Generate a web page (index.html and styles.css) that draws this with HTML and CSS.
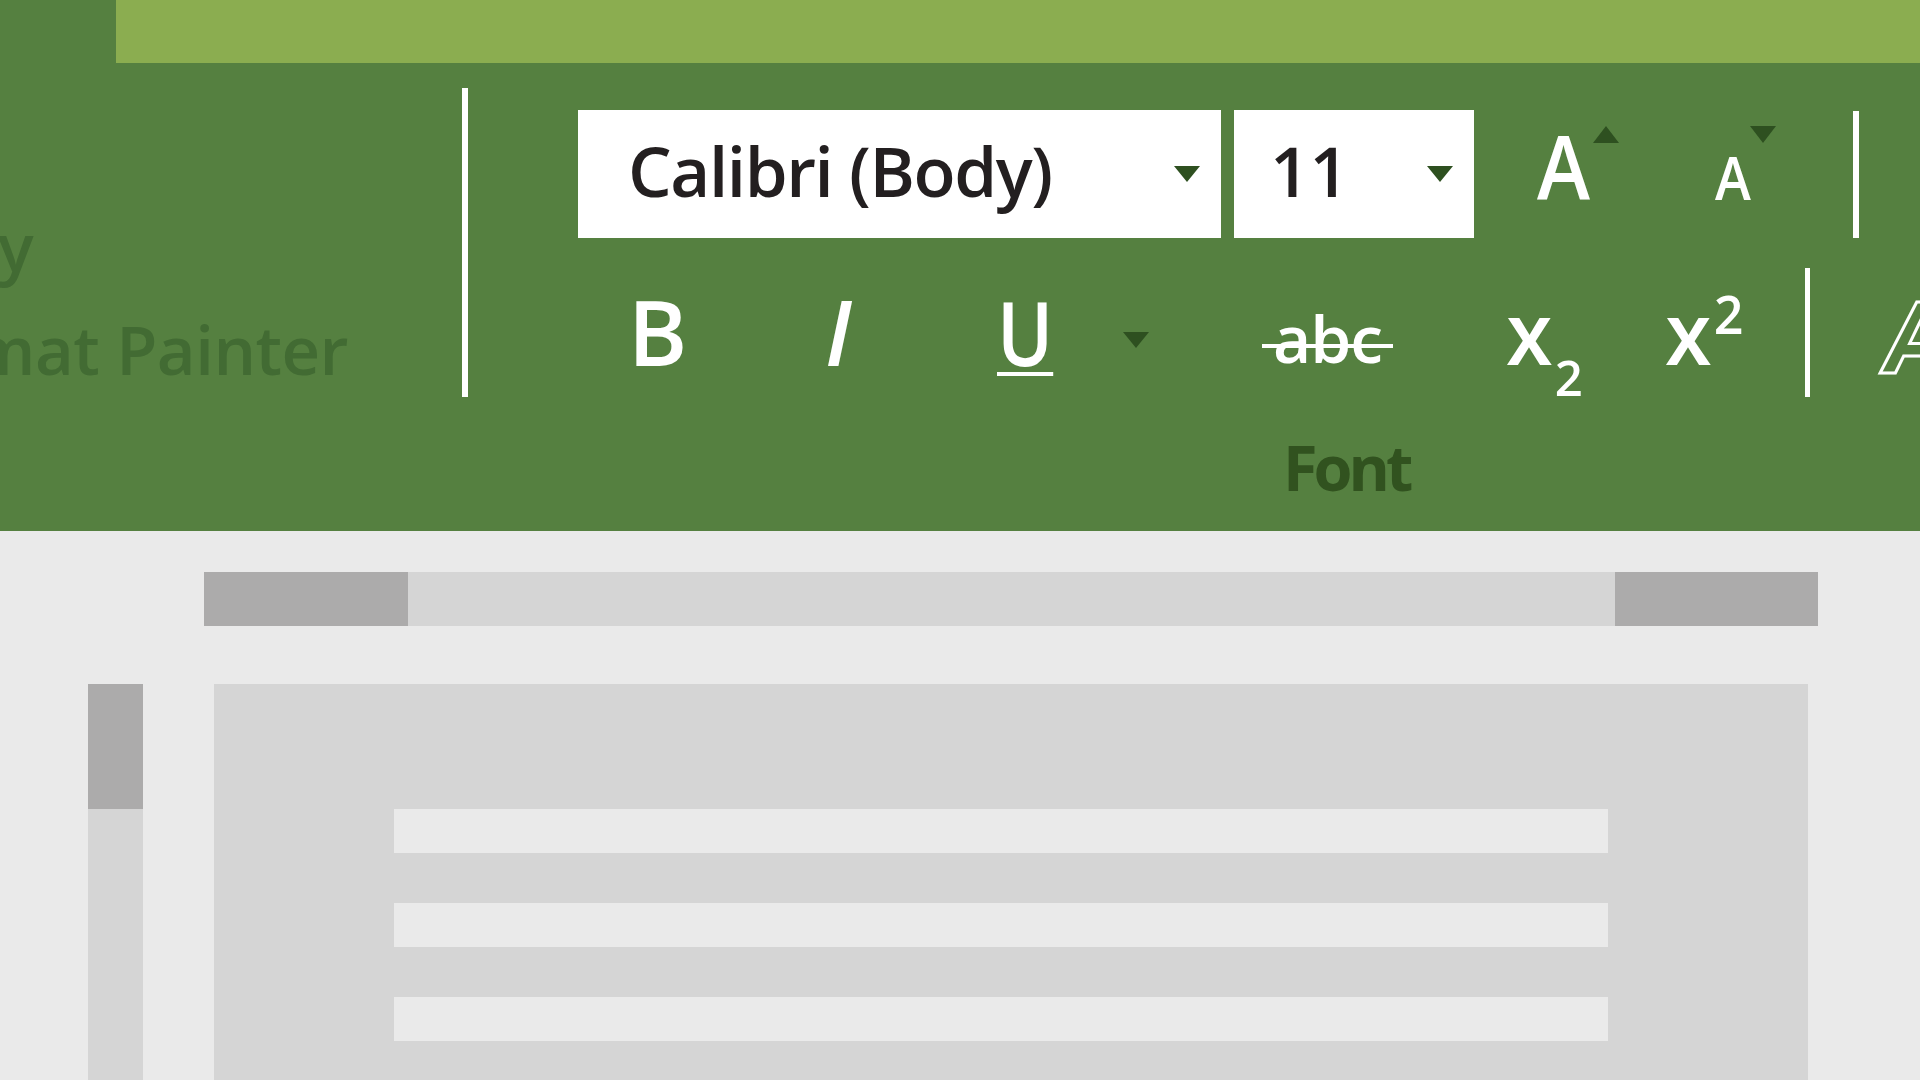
FILE: index.html
```html
<!DOCTYPE html>
<html lang="en">
<head>
<meta charset="utf-8">
<title>Font group</title>
<link rel="stylesheet" href="styles.css">
</head>
<body>
<header class="ribbon">
  <div class="tabs"><div class="tab-active"></div><div class="tabstrip"></div></div>
  <div class="groups">
    <div class="clipboard">
      <div class="cb-line cb-copy">Copy</div>
      <div class="cb-line cb-painter">Format Painter</div>
    </div>
    <div class="sep sep-main"></div>
    <div class="font-group">
      <div class="row row1">
        <div class="combo combo-font">
          <span class="combo-text">Calibri (Body)</span>
          <svg class="caret" viewBox="0 0 26 16"><path d="M0 0H26L13 16Z" fill="#2e5020"/></svg>
        </div>
        <div class="combo combo-size">
          <span class="combo-text">11</span>
          <svg class="caret" viewBox="0 0 26 16"><path d="M0 0H26L13 16Z" fill="#2e5020"/></svg>
        </div>
        <div class="sizer grow">
          <span class="glyph">A</span>
          <svg class="tri" viewBox="0 0 26 17"><path d="M0 17H26L13 0Z" fill="#2e5020"/></svg>
        </div>
        <div class="sizer shrink">
          <span class="glyph">A</span>
          <svg class="tri" viewBox="0 0 26 17"><path d="M0 0H26L13 17Z" fill="#2e5020"/></svg>
        </div>
        <div class="sep sep-sm"></div>
      </div>
      <div class="row row2">
        <div class="btn b2"><span class="bold">B</span></div>
        <div class="btn i2"><span class="ital">I</span></div>
        <div class="btn u2"><span class="under">U</span></div>
        <div class="btn caret2"><svg class="caret" viewBox="0 0 26 16"><path d="M0 0H26L13 16Z" fill="#2e5020"/></svg></div>
        <div class="btn abc"><span class="strike">abc</span></div>
        <div class="btn sub"><span class="x">X</span><span class="two two-sub">2</span></div>
        <div class="btn sup"><span class="x">X</span><span class="two two-sup">2</span></div>
        <div class="sep sep-row2"></div>
        <div class="btn outline"><span>A</span></div>
      </div>
      <div class="group-label">Font</div>
    </div>
  </div>
</header>
<main class="workspace">
  <div class="hscroll">
    <div class="hthumb"></div>
    <div class="hspace"></div>
    <div class="hthumb hthumb-r"></div>
  </div>
  <div class="content">
    <div class="vscroll"><div class="vthumb"></div></div>
    <div class="page">
      <div class="line"></div>
      <div class="line"></div>
      <div class="line"></div>
    </div>
  </div>
</main>
</body>
</html>
```
FILE: styles.css
```css
* { box-sizing: border-box; margin: 0; padding: 0; }
html, body { width: 1920px; height: 1080px; overflow: hidden; }
body {
  background: #eaeaea;
  font-family: "Open Sans", "Noto Sans", sans-serif;
}

/* ribbon */
.ribbon { height: 531px; background: #558040; display: flex; flex-direction: column; }
.tabs { height: 63px; display: flex; flex: none; }
.tab-active { width: 116px; background: #558040; }
.tabstrip { flex: 1; background: #8bad50; }
.groups { flex: 1; display: flex; align-items: flex-start; }

.clipboard { width: 462px; height: 468px; overflow: hidden; display: flex; flex-direction: column; flex: none; }
.cb-line {
  display: flex; justify-content: flex-end; white-space: nowrap;
  font-size: 67px; line-height: 1; font-weight: 600; color: #426b33;
  letter-spacing: -0.5px;
  padding-right: 114px;
}
.cb-copy { margin-top: 150px; padding-right: 429px; }
.cb-painter { margin-top: 36px; }

.sep { background: #fff; flex: none; }
.sep-main { width: 6px; height: 309px; margin-top: 25px; }

.font-group { flex: 1; display: flex; flex-direction: column; }
.row { display: flex; align-items: flex-start; flex: none; }

.row1 { margin-top: 47px; padding-left: 110px; height: 128px; }
.combo {
  background: #fff; height: 128px; display: flex; justify-content: space-between; align-items: flex-start;
  color: #231f20; font-weight: 600; font-size: 69px; line-height: 1; flex: none;
}
.combo-font { width: 643px; padding-left: 50px; padding-right: 21px; }
.combo-font .combo-text { letter-spacing: -1.4px; }
.combo-size { width: 240px; margin-left: 13px; padding-left: 36px; padding-right: 21px; }
.combo-text { margin-top: 26px; white-space: nowrap; }
.caret { width: 26px; height: 16px; margin-top: 56px; flex: none; display: block; }

.sizer { display: flex; align-items: flex-start; color: #fff; flex: none; }
.sizer .glyph { line-height: 1; font-weight: 600; display: block; transform-origin: left top; }
.tri { width: 26px; height: 17px; margin-top: 16px; flex: none; display: block; }
.grow { margin-left: 63px; }
.grow .glyph { font-size: 89px; margin-top: 11px; width: 56px; transform: scaleX(0.9); }
.shrink { margin-left: 96px; }
.shrink .glyph { font-size: 59px; margin-top: 38px; width: 35px; transform: scaleX(0.92); }
.sep-sm { width: 6px; height: 127px; margin-top: 1px; margin-left: 77px; }

.row2 { margin-top: 22px; padding-left: 160px; height: 140px; }
.btn { display: flex; align-items: flex-start; flex: none; color: #fff; line-height: 1; }
.b2 { width: 197px; }
.i2 { width: 171px; }
.u2 { width: 127px; }
.caret2 { width: 139px; }
.caret2 .caret { margin-top: 72px; }
.abc { width: 245px; }
.sub { width: 159px; }
.sup { width: 139px; }

.bold { font-size: 90px; font-weight: 600; margin-top: 26px; }
.ital { font-size: 90px; font-weight: 600; font-style: italic; margin-top: 26px; }
.under {
  display: inline-block; transform: scaleX(0.86); transform-origin: left top;
  font-size: 88px; font-weight: 600; margin-top: 28px; margin-left: 1px;
  text-decoration: underline; text-decoration-thickness: 4px; text-underline-offset: 6px;
}
.strike {
  position: relative; font-size: 66px; font-weight: 600; margin-top: 44px; padding: 0 11px;
  letter-spacing: -1px;
}
.strike::after {
  content: ""; position: absolute; left: 0; right: 0; top: 40px; height: 4px; background: #fff;
}
.x { font-size: 67px; font-weight: 700; margin-top: 46px; }
.two { font-weight: 600; margin-left: 3px; }
.two-sub { font-size: 49px; margin-top: 93px; }
.two-sup { font-size: 52px; margin-top: 28px; }

.sep-row2 { width: 5px; height: 129px; margin-top: 8px; }
.outline { margin-left: 76px; }
.outline span {
  font-size: 98px; font-weight: 700; font-style: italic; margin-top: 26px;
  color: transparent; -webkit-text-stroke: 3px #fff;
}

.group-label {
  margin-top: 35px; padding-left: 815px;
  font-size: 63px; line-height: 1; font-weight: 700; color: #31521f;
  letter-spacing: -4px;
}

/* workspace */
.workspace { height: 549px; display: flex; flex-direction: column; }
.hscroll { margin: 41px 0 0 204px; width: 1614px; height: 54px; display: flex; background: #d5d5d5; flex: none; }
.hthumb { width: 204px; background: #acabab; }
.hthumb-r { width: 203px; }
.hspace { flex: 1; }
.content { margin-top: 58px; display: flex; flex: 1; align-items: stretch; }
.vscroll { margin-left: 88px; width: 55px; background: #d5d5d5; flex: none; }
.vthumb { height: 125px; background: #acabab; }
.page {
  margin-left: 71px; width: 1594px; background: #d5d5d5; flex: none;
  padding: 125px 0 0 180px; display: flex; flex-direction: column; gap: 50px;
}
.line { width: 1214px; height: 44px; background: #eaeaea; flex: none; }
```
